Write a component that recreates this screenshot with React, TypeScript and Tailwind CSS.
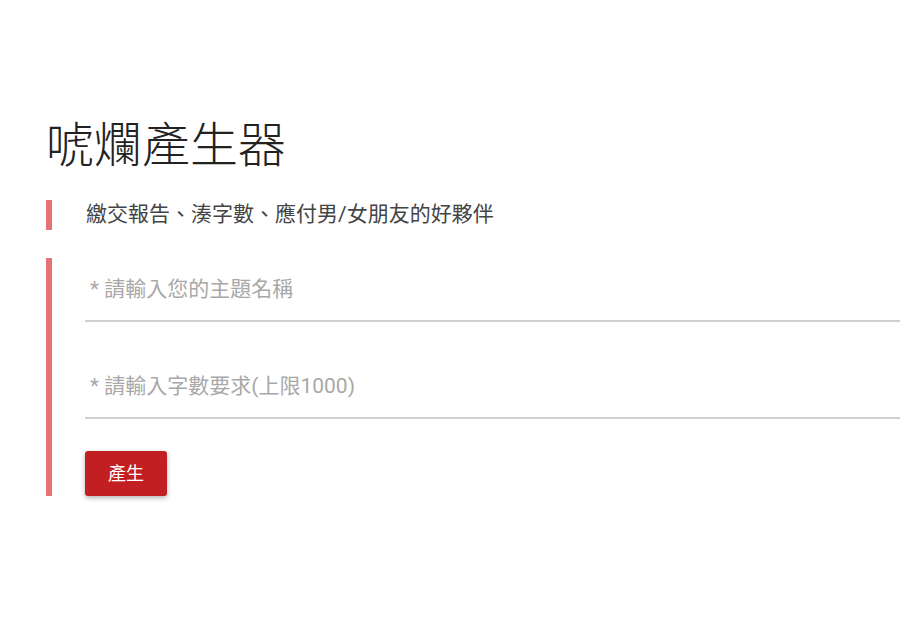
import { useState } from 'react';

export default function App() {
  const [topic, setTopic] = useState('');
  const [count, setCount] = useState('');

  return (
    <div
      className="min-h-[631px] bg-white pl-[46px] pt-[116px]"
      style={{ fontFamily: 'Roboto, "Noto Sans CJK TC", sans-serif' }}
    >
      <h1 className="text-[48px] font-light leading-[60px] text-[#222]">唬爛產生器</h1>

      <div className="mt-[24px] flex h-[30px] items-center border-l-[6px] border-[#e57373] pl-[34px] text-[21px] text-[#444]">
        繳交報告、湊字數、應付男/女朋友的好夥伴
      </div>

      <form
        onSubmit={(event) => event.preventDefault()}
        className="mt-[28px] border-l-[6px] border-[#e57373] pl-[33px]"
      >
        <input
          type="text"
          value={topic}
          onChange={(event) => setTopic(event.target.value)}
          placeholder="* 請輸入您的主題名稱"
          className="block h-[64px] w-full border-b-2 border-[#cfcfcf] bg-transparent px-[5px] text-[21px] text-[#333] outline-none placeholder:text-[#a8a8a8]"
        />
        <input
          type="text"
          value={count}
          onChange={(event) => setCount(event.target.value)}
          placeholder="* 請輸入字數要求(上限1000)"
          className="mt-[33px] block h-[64px] w-full border-b-2 border-[#cfcfcf] bg-transparent px-[5px] text-[21px] text-[#333] outline-none placeholder:text-[#a8a8a8]"
        />
        <button
          type="submit"
          className="mt-[32px] h-[45px] w-[82px] rounded-[3px] bg-[#c21f22] text-[18px] text-white shadow-[0_2px_5px_rgba(0,0,0,0.3)]"
        >
          產生
        </button>
      </form>
    </div>
  );
}
